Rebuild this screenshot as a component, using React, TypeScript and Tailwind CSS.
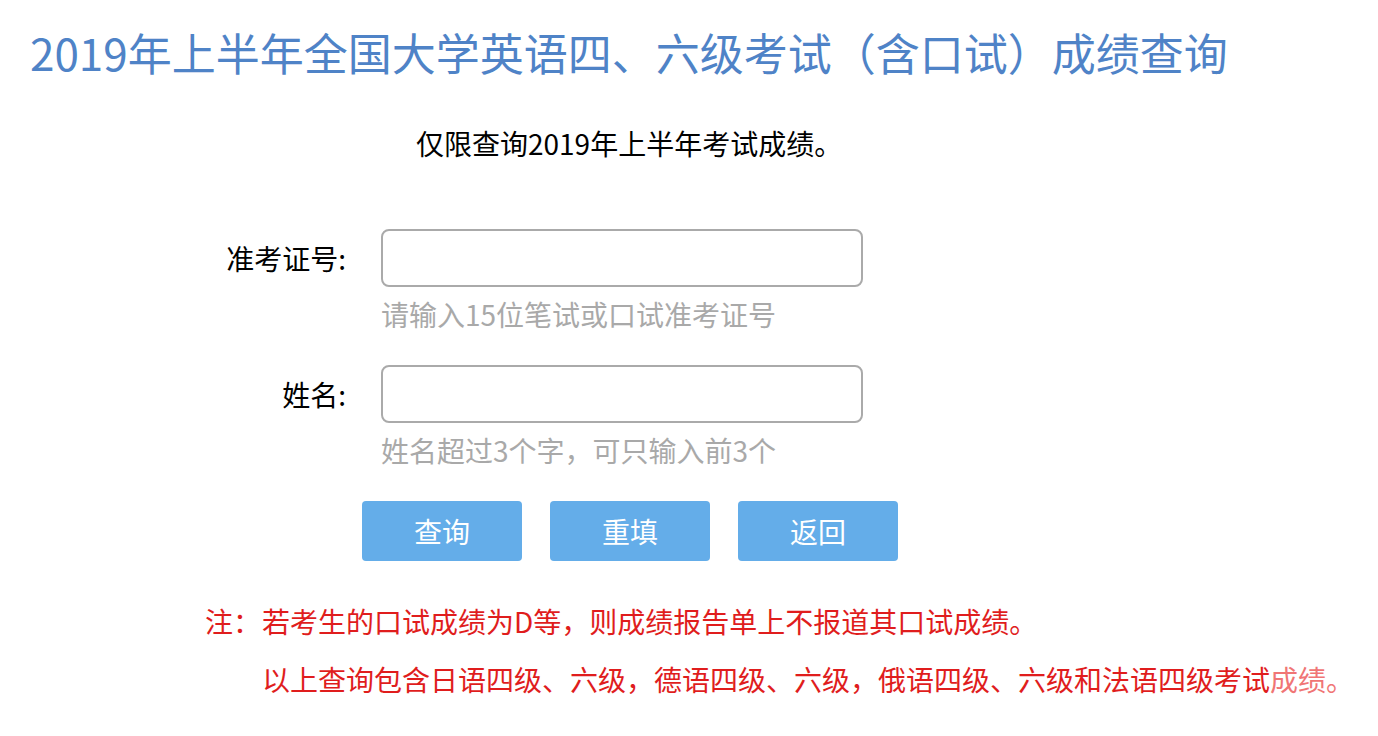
export default function App() {
    const font = "font-['Microsoft_YaHei','Noto_Sans_CJK_SC',sans-serif]";

    return (
        <div className={`min-h-screen bg-white ${font}`}>
            {/* 标题 */}
            <h1 className="pl-[30px] pt-[24px] text-[44px] leading-[56px] font-normal text-[#4f83c7] whitespace-nowrap">
                2019年上半年全国大学英语四、六级考试（含口试）成绩查询
            </h1>

            <p className="mt-[46px] pl-[416px] text-[28px] leading-[34px] text-black whitespace-nowrap">
                仅限查询2019年上半年考试成绩。
            </p>

            {/* 表单 */}
            <form className="mt-[69px] flex flex-col" onSubmit={e => e.preventDefault()}>
                <div className="flex items-center">
                    <label className="w-[346px] text-right text-[28px] leading-[34px] text-black">准考证号:</label>
                    <input
                        type="text"
                        className="ml-[35px] w-[482px] h-[58px] rounded-lg border-2 border-[#aaaaaa] bg-white px-3 text-[24px] outline-none"
                    />
                </div>
                <div className="pl-[381px] mt-[10px] text-[28px] leading-[34px] text-[#a9a9a9] whitespace-nowrap">
                    请输入15位笔试或口试准考证号
                </div>

                <div className="flex items-center mt-[34px]">
                    <label className="w-[346px] text-right text-[28px] leading-[34px] text-black">姓名:</label>
                    <input
                        type="text"
                        className="ml-[35px] w-[482px] h-[58px] rounded-lg border-2 border-[#aaaaaa] bg-white px-3 text-[24px] outline-none"
                    />
                </div>
                <div className="pl-[381px] mt-[10px] text-[28px] leading-[34px] text-[#a9a9a9] whitespace-nowrap">
                    姓名超过3个字，可只输入前3个
                </div>

                {/* 按钮 */}
                <div className="flex gap-[28px] pl-[362px] mt-[34px]">
                    <button type="submit" className="w-[160px] h-[60px] rounded-[4px] bg-[#64ade9] text-white text-[28px]">查询</button>
                    <button type="reset" className="w-[160px] h-[60px] rounded-[4px] bg-[#64ade9] text-white text-[28px]">重填</button>
                    <button type="button" className="w-[160px] h-[60px] rounded-[4px] bg-[#64ade9] text-white text-[28px]">返回</button>
                </div>
            </form>

            {/* 注意事项 */}
            <div className="mt-[31px] pl-[205px] text-[28px] leading-[58px] text-[#e01d1d] whitespace-nowrap">
                <div className="flex">
                    <span className="w-[57px] shrink-0">注：</span>
                    <div>
                        <p>若考生的口试成绩为D等，则成绩报告单上不报道其口试成绩。</p>
                        <p>以上查询包含日语四级、六级，德语四级、六级，俄语四级、六级和法语四级考试<span className="text-[#f07575]">成绩。</span></p>
                    </div>
                </div>
            </div>
        </div>
    );
}
